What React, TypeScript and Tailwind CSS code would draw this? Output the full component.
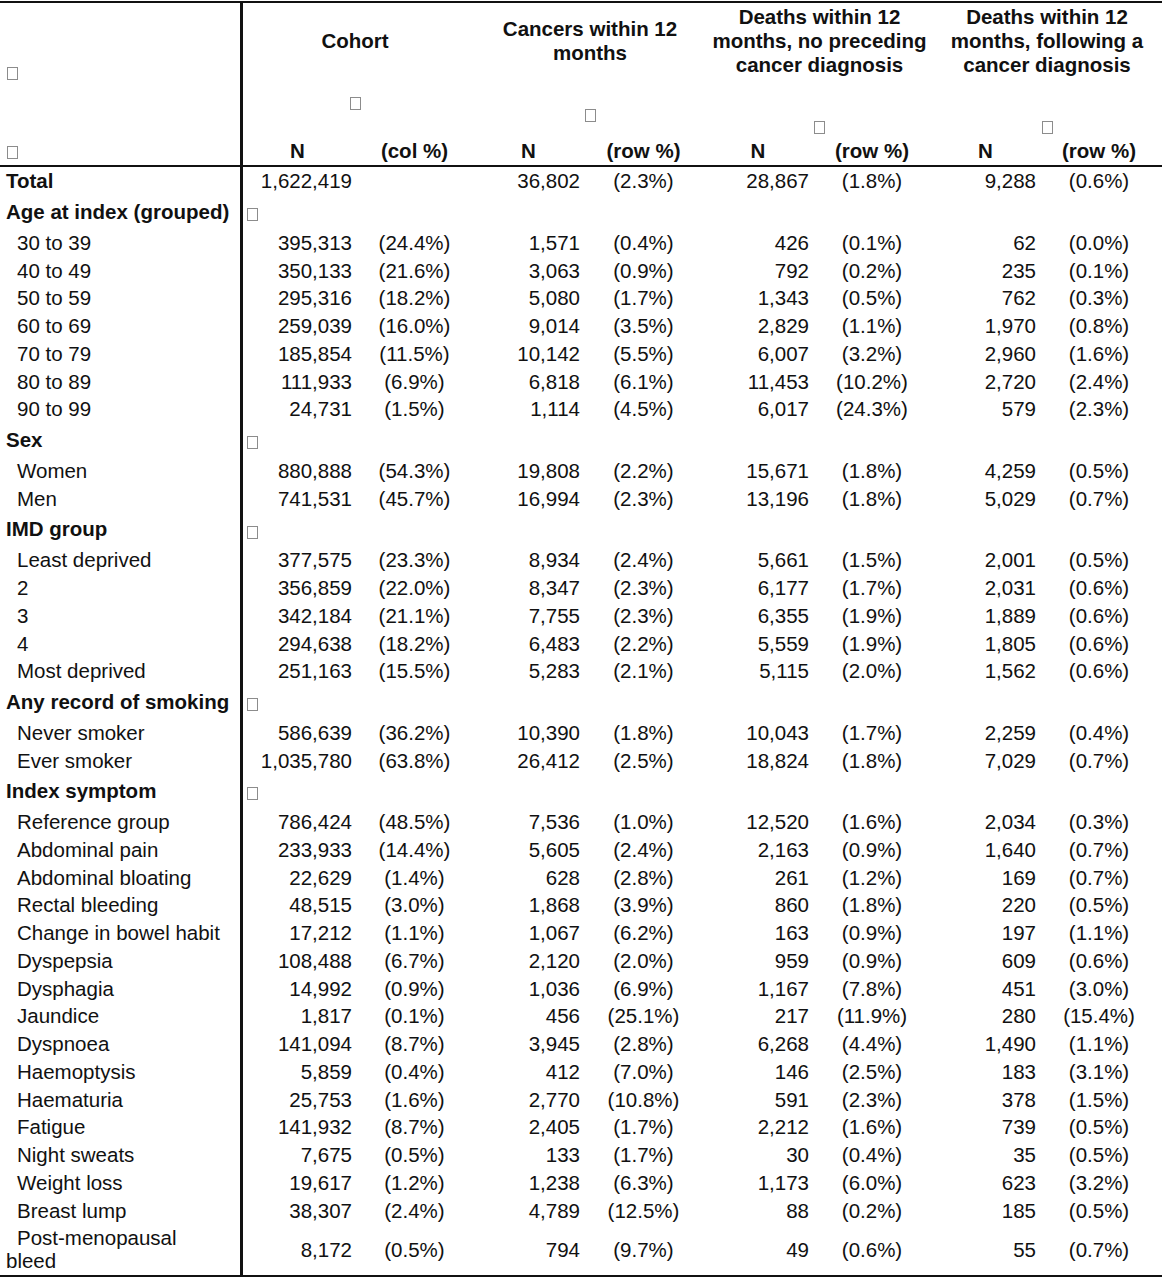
import React from "react";

type Row =
	| { kind: "section"; label: string }
	| { kind: "data"; label: string; v: string[]; bold?: boolean; wrap?: boolean };

const Box = () => (
	<span className="inline-block w-[11px] h-[13px] border border-[#8c8c8c] align-middle" />
);

const d = (label: string, s: string): Row => ({ kind: "data", label, v: s.split(" ") });
const sec = (label: string): Row => ({ kind: "section", label });

const rows: Row[] = [
	{ kind: "data", label: "Total", bold: true, v: ["1,622,419", "", "36,802", "(2.3%)", "28,867", "(1.8%)", "9,288", "(0.6%)"] },
	sec("Age at index (grouped)"),
	d("30 to 39", "395,313 (24.4%) 1,571 (0.4%) 426 (0.1%) 62 (0.0%)"),
	d("40 to 49", "350,133 (21.6%) 3,063 (0.9%) 792 (0.2%) 235 (0.1%)"),
	d("50 to 59", "295,316 (18.2%) 5,080 (1.7%) 1,343 (0.5%) 762 (0.3%)"),
	d("60 to 69", "259,039 (16.0%) 9,014 (3.5%) 2,829 (1.1%) 1,970 (0.8%)"),
	d("70 to 79", "185,854 (11.5%) 10,142 (5.5%) 6,007 (3.2%) 2,960 (1.6%)"),
	d("80 to 89", "111,933 (6.9%) 6,818 (6.1%) 11,453 (10.2%) 2,720 (2.4%)"),
	d("90 to 99", "24,731 (1.5%) 1,114 (4.5%) 6,017 (24.3%) 579 (2.3%)"),
	sec("Sex"),
	d("Women", "880,888 (54.3%) 19,808 (2.2%) 15,671 (1.8%) 4,259 (0.5%)"),
	d("Men", "741,531 (45.7%) 16,994 (2.3%) 13,196 (1.8%) 5,029 (0.7%)"),
	sec("IMD group"),
	d("Least deprived", "377,575 (23.3%) 8,934 (2.4%) 5,661 (1.5%) 2,001 (0.5%)"),
	d("2", "356,859 (22.0%) 8,347 (2.3%) 6,177 (1.7%) 2,031 (0.6%)"),
	d("3", "342,184 (21.1%) 7,755 (2.3%) 6,355 (1.9%) 1,889 (0.6%)"),
	d("4", "294,638 (18.2%) 6,483 (2.2%) 5,559 (1.9%) 1,805 (0.6%)"),
	d("Most deprived", "251,163 (15.5%) 5,283 (2.1%) 5,115 (2.0%) 1,562 (0.6%)"),
	sec("Any record of smoking"),
	d("Never smoker", "586,639 (36.2%) 10,390 (1.8%) 10,043 (1.7%) 2,259 (0.4%)"),
	d("Ever smoker", "1,035,780 (63.8%) 26,412 (2.5%) 18,824 (1.8%) 7,029 (0.7%)"),
	sec("Index symptom"),
	d("Reference group", "786,424 (48.5%) 7,536 (1.0%) 12,520 (1.6%) 2,034 (0.3%)"),
	d("Abdominal pain", "233,933 (14.4%) 5,605 (2.4%) 2,163 (0.9%) 1,640 (0.7%)"),
	d("Abdominal bloating", "22,629 (1.4%) 628 (2.8%) 261 (1.2%) 169 (0.7%)"),
	d("Rectal bleeding", "48,515 (3.0%) 1,868 (3.9%) 860 (1.8%) 220 (0.5%)"),
	d("Change in bowel habit", "17,212 (1.1%) 1,067 (6.2%) 163 (0.9%) 197 (1.1%)"),
	d("Dyspepsia", "108,488 (6.7%) 2,120 (2.0%) 959 (0.9%) 609 (0.6%)"),
	d("Dysphagia", "14,992 (0.9%) 1,036 (6.9%) 1,167 (7.8%) 451 (3.0%)"),
	d("Jaundice", "1,817 (0.1%) 456 (25.1%) 217 (11.9%) 280 (15.4%)"),
	d("Dyspnoea", "141,094 (8.7%) 3,945 (2.8%) 6,268 (4.4%) 1,490 (1.1%)"),
	d("Haemoptysis", "5,859 (0.4%) 412 (7.0%) 146 (2.5%) 183 (3.1%)"),
	d("Haematuria", "25,753 (1.6%) 2,770 (10.8%) 591 (2.3%) 378 (1.5%)"),
	d("Fatigue", "141,932 (8.7%) 2,405 (1.7%) 2,212 (1.6%) 739 (0.5%)"),
	d("Night sweats", "7,675 (0.5%) 133 (1.7%) 30 (0.4%) 35 (0.5%)"),
	d("Weight loss", "19,617 (1.2%) 1,238 (6.3%) 1,173 (6.0%) 623 (3.2%)"),
	d("Breast lump", "38,307 (2.4%) 4,789 (12.5%) 88 (0.2%) 185 (0.5%)"),
	{ ...(d("Post-menopausal bleed", "8,172 (0.5%) 794 (9.7%) 49 (0.6%) 55 (0.7%)") as any), wrap: true },
];

const groups = [
	{ title: "Cohort", pad: "pr-[10px]" },
	{ title: "Cancers within 12 months", pad: "pr-[4px]" },
	{ title: "Deaths within 12 months, no preceding cancer diagnosis", pad: "pr-[3px]" },
	{ title: "Deaths within 12 months, following a cancer diagnosis", pad: "pr-[3px]" },
];

const App = () => {
	return (
		<div className="bg-white w-[1163px] h-[1280px] pt-px font-['Liberation_Sans',Arial,sans-serif] text-[20.5px] leading-[23px] text-[#111]">
			<table className="table-fixed border-separate border-spacing-0 w-[1162px] border-t-2 border-b-2 border-[#111]">
				<colgroup>
					<col className="w-[243px]" />
					<col className="w-[109px]" />
					<col className="w-[125px]" />
					<col className="w-[103px]" />
					<col className="w-[127px]" />
					<col className="w-[102px]" />
					<col className="w-[126px]" />
					<col className="w-[101px]" />
					<col className="w-[126px]" />
				</colgroup>
				<thead>
					<tr>
						<th className="h-[133px] p-0 pl-[7px] pt-[3px] text-left align-middle border-r-[3px] border-[#111]">
							<Box />
						</th>
						{groups.map((g) => (
							<th key={g.title} colSpan={2} className={`h-[133px] p-0 align-middle font-bold ${g.pad}`}>
								<div className="flex flex-col items-center gap-[44px] leading-[24px]">
									<div className="text-center">{g.title}</div>
									<Box />
								</div>
							</th>
						))}
					</tr>
					<tr>
						<th className="h-[31px] p-0 pl-[7px] text-left align-middle border-r-[3px] border-b-2 border-[#111]">
							<Box />
						</th>
						{["N", "(col %)", "N", "(row %)", "N", "(row %)", "N", "(row %)"].map((h, i) => (
							<th key={i} className="h-[31px] p-0 text-center align-middle font-bold border-b-2 border-[#111]">
								{h}
							</th>
						))}
					</tr>
				</thead>
				<tbody>
					{rows.map((r, i) =>
						r.kind === "section" ? (
							<tr key={i}>
								<td className="h-[33.8px] p-0 pl-[6px] align-middle font-bold whitespace-nowrap border-r-[3px] border-[#111]">
									{r.label}
								</td>
								<td className="h-[33.8px] p-0 pl-[4px] pt-[2px] align-middle">
									<Box />
								</td>
								<td colSpan={7} />
							</tr>
						) : (
							<tr key={i}>
								<td
									className={`${r.wrap ? "h-[51px] pl-[6px] indent-[11px]" : r.bold ? "h-[27.75px] pl-[6px]" : "h-[27.75px] pl-[17px]"} p-0 pr-0 align-middle whitespace-nowrap border-r-[3px] border-[#111] ${r.bold ? "font-bold" : ""}`}
								>
									{r.wrap ? (
										<>
											Post-menopausal
											<br />
											bleed
										</>
									) : (
										r.label
									)}
								</td>
								{r.v.map((v, j) => (
									<td
										key={j}
										className={`p-0 align-middle whitespace-nowrap ${j % 2 === 0 ? "text-right" : "text-center"}`}
									>
										{v}
									</td>
								))}
							</tr>
						)
					)}
				</tbody>
			</table>
		</div>
	);
};

export default App;
